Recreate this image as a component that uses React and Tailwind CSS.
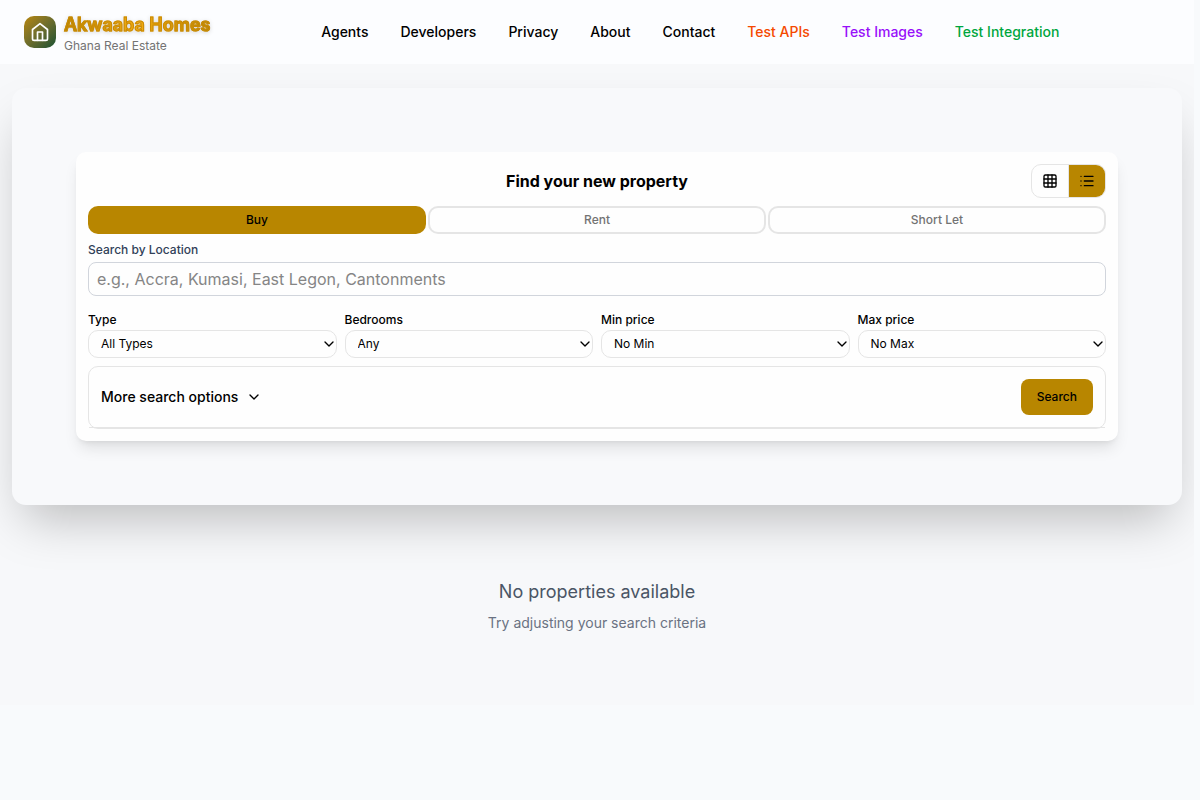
import { Grid3x3, List, ChevronDown } from "lucide-react";

const links = [
  { label: "Agents", color: "text-black" },
  { label: "Developers", color: "text-black" },
  { label: "Privacy", color: "text-black" },
  { label: "About", color: "text-black" },
  { label: "Contact", color: "text-black" },
  { label: "Test APIs", color: "text-[#f54900]" },
  { label: "Test Images", color: "text-[#9810fa]" },
  { label: "Test Integration", color: "text-[#00a63e]" },
];

const filters = [
  { id: "type", label: "Type", options: ["All Types", "House", "Apartment", "Land"] },
  { id: "bedrooms", label: "Bedrooms", options: ["Any", "1", "2", "3", "4+"] },
  { id: "min-price", label: "Min price", options: ["No Min", "GH₵ 100,000", "GH₵ 500,000"] },
  { id: "max-price", label: "Max price", options: ["No Max", "GH₵ 500,000", "GH₵ 1,000,000"] },
];

function HomeIcon() {
  return (
    <svg viewBox="0 0 24 24" className="size-5" fill="none" stroke="white" strokeWidth="2" strokeLinecap="round" strokeLinejoin="round" aria-hidden="true">
      <path d="m3 9 9-7 9 7v11a2 2 0 0 1-2 2H5a2 2 0 0 1-2-2z" />
      <polyline points="9 22 9 12 15 12 15 22" />
    </svg>
  );
}

function Header() {
  return (
    <header className="relative z-10 flex h-16 items-center justify-between bg-[#fcfdff] px-6">
      <a href="#home" className="flex items-center gap-2">
        <span className="flex size-8 items-center justify-center rounded-[10px] bg-linear-to-br from-[#b88600] to-[#0f5132]">
          <HomeIcon />
        </span>
        <span className="flex flex-col pt-0.5">
          <span className="bg-linear-to-r from-[#b88600] via-[#f5ac10] to-[#b88600] bg-clip-text text-lg leading-[26px] font-semibold text-transparent drop-shadow-sm [-webkit-text-stroke:1px_#c98a06]">
            Akwaaba Homes
          </span>
          <span className="text-xs text-[#737373]">Ghana Real Estate</span>
        </span>
      </a>
      <nav className="flex items-center gap-8 text-sm font-medium">
        {links.map((l) => (
          <a key={l.label} href="#nav" className={l.color}>
            {l.label}
          </a>
        ))}
      </nav>
      <div />
    </header>
  );
}

function SearchPanel() {
  return (
    <form className="rounded-[10px] bg-[#fefefe] p-3 shadow-lg" onSubmit={(e) => e.preventDefault()}>
      <div className="mb-2 grid grid-cols-[1fr_auto_1fr] items-center">
        <h1 className="col-start-2 text-base font-bold text-black">Find your new property</h1>
        <div className="flex justify-self-end overflow-hidden rounded-[10px] border border-[#e5e5e5]">
          <button type="button" aria-label="Grid view" className="flex h-8 w-9 items-center justify-center text-black">
            <Grid3x3 className="size-4" />
          </button>
          <button type="button" aria-label="List view" className="flex h-8 w-[37px] items-center justify-center border-l border-[#e5e5e5] bg-[#b88600] text-black">
            <List className="size-4" />
          </button>
        </div>
      </div>

      <div className="grid grid-cols-3 gap-0.5 text-xs font-medium">
        <button type="button" className="h-7 rounded-[10px] bg-[#b88600] text-black">Buy</button>
        <button type="button" className="h-7 rounded-[10px] border-2 border-[#e5e5e5] text-[#737373]">Rent</button>
        <button type="button" className="h-7 rounded-[10px] border-2 border-[#e5e5e5] text-[#737373]">Short Let</button>
      </div>

      <div className="mt-2 flex flex-col gap-1">
        <label htmlFor="location" className="text-xs font-medium text-[#314158]">Search by Location</label>
        <input
          id="location"
          type="text"
          placeholder="e.g., Accra, Kumasi, East Legon, Cantonments"
          className="h-[34px] w-full rounded-lg border border-[#d1d5dc] px-2 text-base placeholder:text-[#858585]"
        />
      </div>

      <div className="mt-4 grid grid-cols-4 gap-2">
        {filters.map((f) => (
          <div key={f.id} className="flex flex-col gap-0.5">
            <label htmlFor={f.id} className="text-xs font-medium text-black">{f.label}</label>
            <div className="grid items-center">
              <select
                id={f.id}
                className="col-start-1 row-start-1 h-7 w-full appearance-none rounded-[10px] border border-[#e5e5e5] bg-[#fefefe] px-3 text-xs text-black"
              >
                {f.options.map((o) => (
                  <option key={o}>{o}</option>
                ))}
              </select>
              <ChevronDown className="pointer-events-none col-start-1 row-start-1 size-4 justify-self-end text-black" />
            </div>
          </div>
        ))}
      </div>

      <div className="mt-2 rounded-[10px] border border-[#e5e5e5]">
        <div className="flex items-center justify-between border-b border-[#e5e5e5] p-3">
          <button type="button" className="flex items-center gap-2 text-sm font-medium text-black">
            More search options
            <ChevronDown className="size-4" />
          </button>
          <button type="submit" className="h-9 rounded-lg bg-[#b88600] px-4 text-xs font-medium text-black">
            Search
          </button>
        </div>
      </div>
    </form>
  );
}

export default function App() {
  return (
    <div className="min-h-screen bg-[#f8fafc] pr-1.5 font-['Inter',sans-serif] antialiased">
      <div className="overflow-hidden bg-[#f7f8fa]">
        <Header />
        <main className="px-3 py-6">
          <section className="rounded-[14px] bg-[#f8f9fb] p-16 shadow-2xl">
            <SearchPanel />
          </section>
          <section className="mt-6 py-12 text-center">
            <p className="text-lg leading-[30px] text-[#4a5565]">No properties available</p>
            <p className="mt-1.5 text-sm text-[#6a7282]">Try adjusting your search criteria</p>
          </section>
        </main>
      </div>
    </div>
  );
}
